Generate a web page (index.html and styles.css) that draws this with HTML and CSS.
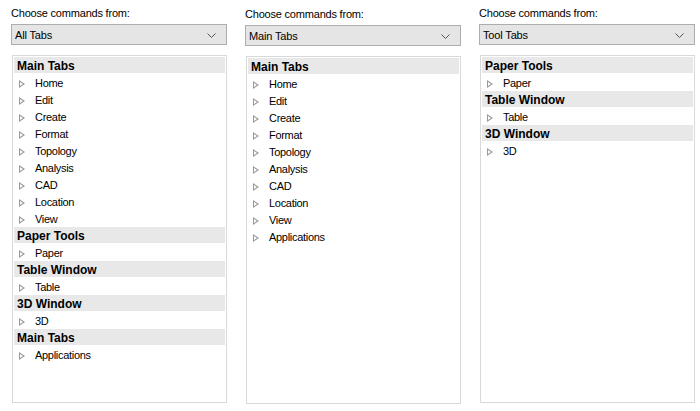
FILE: index.html
```html
<!DOCTYPE html>
<html>
<head>
<meta charset="utf-8">
<link rel="stylesheet" href="styles.css">
</head>
<body>
<div class="page">
  <div class="col">
    <div class="label">Choose commands from:</div>
    <div class="combo"><span class="combo-text">All Tabs</span><svg class="chev" width="9" height="5" viewBox="0 0 9 5"><path d="M0.5 0.5 L4.5 4.5 L8.5 0.5" fill="none" stroke="#555" stroke-width="1"/></svg></div>
    <div class="list">
      <div class="hdr">Main Tabs</div>
      <div class="item"><span class="tri"></span>Home</div>
      <div class="item"><span class="tri"></span>Edit</div>
      <div class="item"><span class="tri"></span>Create</div>
      <div class="item"><span class="tri"></span>Format</div>
      <div class="item"><span class="tri"></span>Topology</div>
      <div class="item"><span class="tri"></span>Analysis</div>
      <div class="item"><span class="tri"></span>CAD</div>
      <div class="item"><span class="tri"></span>Location</div>
      <div class="item"><span class="tri"></span>View</div>
      <div class="hdr">Paper Tools</div>
      <div class="item"><span class="tri"></span>Paper</div>
      <div class="hdr">Table Window</div>
      <div class="item"><span class="tri"></span>Table</div>
      <div class="hdr">3D Window</div>
      <div class="item"><span class="tri"></span>3D</div>
      <div class="hdr">Main Tabs</div>
      <div class="item"><span class="tri"></span>Applications</div>
    </div>
  </div>
  <div class="col col-mid">
    <div class="label">Choose commands from:</div>
    <div class="combo"><span class="combo-text">Main Tabs</span><svg class="chev" width="9" height="5" viewBox="0 0 9 5"><path d="M0.5 0.5 L4.5 4.5 L8.5 0.5" fill="none" stroke="#555" stroke-width="1"/></svg></div>
    <div class="list">
      <div class="hdr">Main Tabs</div>
      <div class="item"><span class="tri"></span>Home</div>
      <div class="item"><span class="tri"></span>Edit</div>
      <div class="item"><span class="tri"></span>Create</div>
      <div class="item"><span class="tri"></span>Format</div>
      <div class="item"><span class="tri"></span>Topology</div>
      <div class="item"><span class="tri"></span>Analysis</div>
      <div class="item"><span class="tri"></span>CAD</div>
      <div class="item"><span class="tri"></span>Location</div>
      <div class="item"><span class="tri"></span>View</div>
      <div class="item"><span class="tri"></span>Applications</div>
    </div>
  </div>
  <div class="col">
    <div class="label">Choose commands from:</div>
    <div class="combo"><span class="combo-text">Tool Tabs</span><svg class="chev" width="9" height="5" viewBox="0 0 9 5"><path d="M0.5 0.5 L4.5 4.5 L8.5 0.5" fill="none" stroke="#555" stroke-width="1"/></svg></div>
    <div class="list">
      <div class="hdr">Paper Tools</div>
      <div class="item"><span class="tri"></span>Paper</div>
      <div class="hdr">Table Window</div>
      <div class="item"><span class="tri"></span>Table</div>
      <div class="hdr">3D Window</div>
      <div class="item"><span class="tri"></span>3D</div>
    </div>
  </div>
</div>
</body>
</html>
```
FILE: styles.css
```css
html, body {
  margin: 0;
  padding: 0;
  background: #ffffff;
}
body {
  font-family: "Liberation Sans", Arial, sans-serif;
  font-size: 11px;
  color: #000;
}
.page {
  display: flex;
  gap: 18px;
  padding: 5px 0 0 11px;
}
.col {
  width: 216px;
  display: flex;
  flex-direction: column;
}
.col-mid {
  margin-top: 1px;
}
.label {
  height: 19px;
  line-height: 16px;
  letter-spacing: -0.2px;
  color: #000;
}
.combo {
  height: 21px;
  box-sizing: border-box;
  border: 1px solid #adadad;
  background: #e5e5e5;
  display: flex;
  align-items: center;
  justify-content: space-between;
  padding: 0 10px 0 3px;
}
.combo-text {
  letter-spacing: -0.15px;
}
.chev {
  display: block;
  margin-top: 1px;
}
.list {
  margin-top: 10px;
  margin-left: 1px;
  height: 348px;
  box-sizing: border-box;
  border: 1px solid #d9d9d9;
  padding: 1px 1px 0 1px;
  display: flex;
  flex-direction: column;
}
.hdr {
  height: 16px;
  box-sizing: border-box;
  padding-top: 2px;
  line-height: 14px;
  margin-bottom: 1px;
  background: #e8e8e8;
  font-size: 12px;
  font-weight: bold;
  padding-left: 3px;
  color: #000;
}
.item {
  height: 17px;
  box-sizing: border-box;
  padding-top: 2px;
  line-height: 15px;
  display: flex;
  align-items: center;
  padding-left: 5px;
  letter-spacing: -0.3px;
}
.tri {
  width: 0;
  height: 0;
  border-top: 4px solid transparent;
  border-bottom: 4px solid transparent;
  border-left: 6px solid #999999;
  margin-right: 10px;
  position: relative;
}
.tri::after {
  content: "";
  position: absolute;
  left: -5px;
  top: -2px;
  border-top: 2px solid transparent;
  border-bottom: 2px solid transparent;
  border-left: 3px solid #ffffff;
}
```
